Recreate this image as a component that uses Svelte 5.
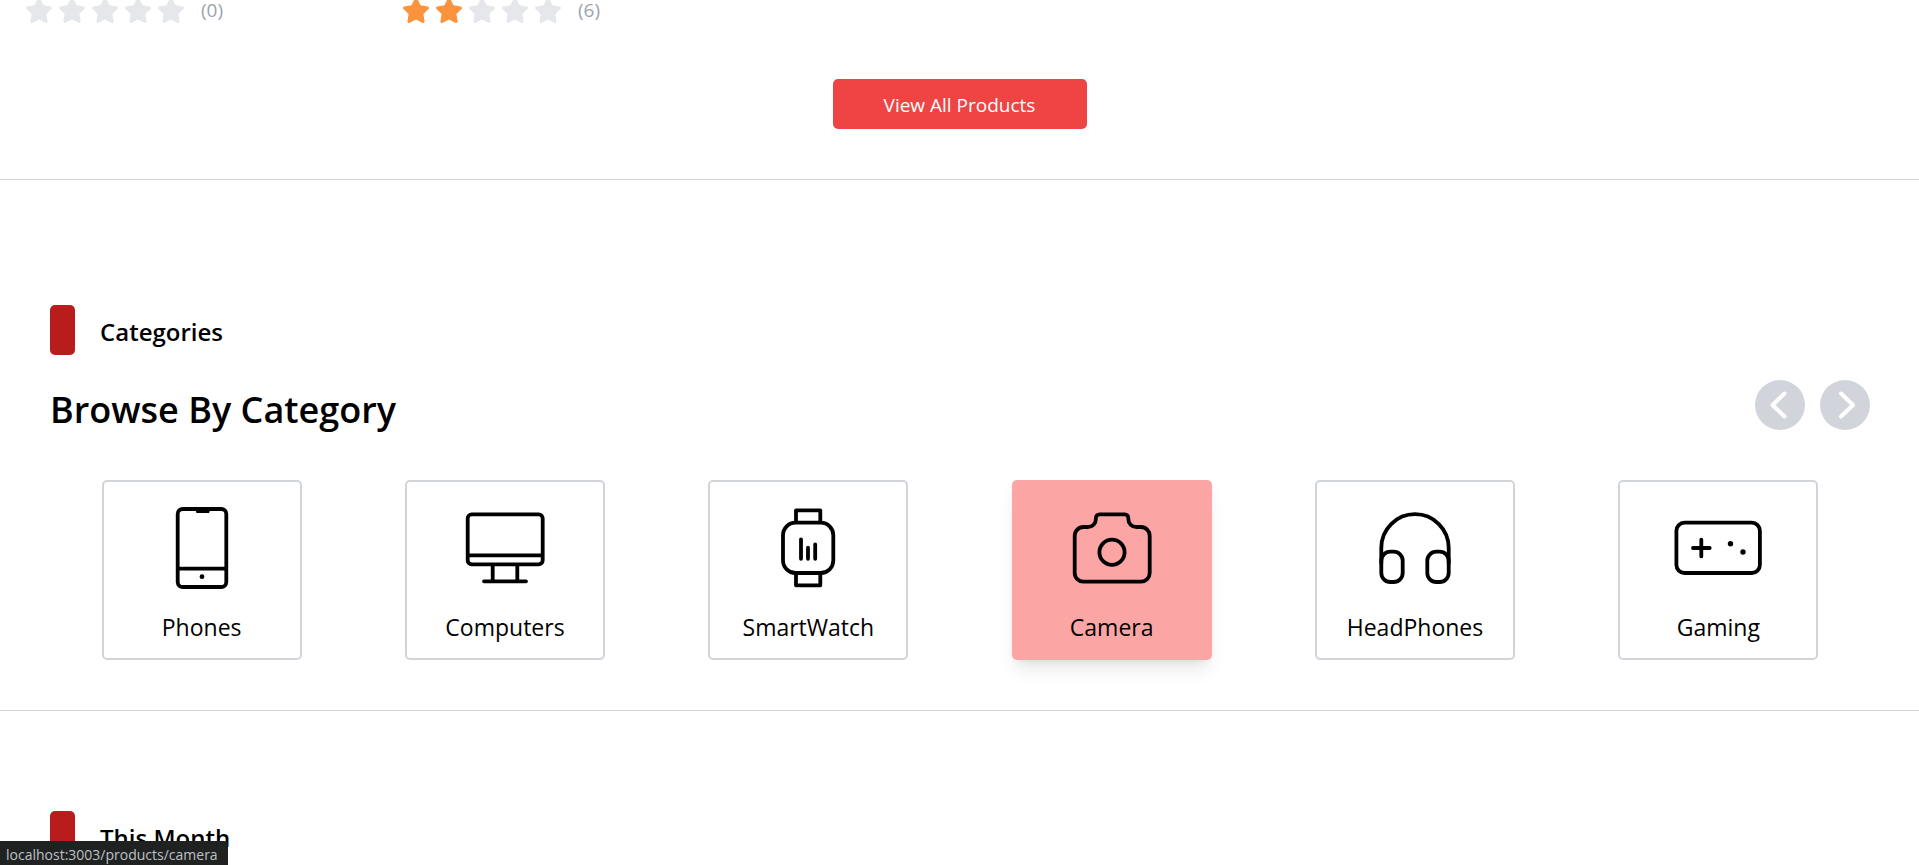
<script>
  const ratings = [
    { stars: 0, reviews: 0 },
    { stars: 2, reviews: 6 }
  ];
  const categories = [
    { name: 'Phones', slug: 'phones' },
    { name: 'Computers', slug: 'computers' },
    { name: 'SmartWatch', slug: 'smartwatch' },
    { name: 'Camera', slug: 'camera' },
    { name: 'HeadPhones', slug: 'headphones' },
    { name: 'Gaming', slug: 'gaming' }
  ];
  const active = 'camera';
</script>

<main class="page">
  <section class="products">
    <div class="ratings">
      {#each ratings as r}
        <div class="rating" role="img" aria-label="{r.stars} of 5 stars">
          {#each [1, 2, 3, 4, 5] as n}
            <svg class="star" class:filled={n <= r.stars} viewBox="0 0 576 512" aria-hidden="true">
              <path d="M259.3 17.8L194 150.2 47.9 171.5c-26.2 3.8-36.7 36.1-17.7 54.6l105.7 103-25 145.5c-4.5 26.3 23.2 46 46.4 33.7L288 439.6l130.7 68.7c23.2 12.2 50.9-7.4 46.4-33.7l-25-145.5 105.7-103c19-18.5 8.5-50.8-17.7-54.6L382 150.2 316.7 17.8c-11.7-23.6-45.6-23.9-57.4 0z" />
            </svg>
          {/each}
          <span class="count">({r.reviews})</span>
        </div>
      {/each}
    </div>
    <button class="view-all" type="button">View All Products</button>
  </section>

  <section class="browse">
    <div class="eyebrow">
      <span class="marker"></span>
      <span class="eyebrow-text">Categories</span>
    </div>
    <header class="heading">
      <h2>Browse By Category</h2>
      <div class="arrows">
        <button class="arrow" type="button" aria-label="Previous">
          <svg viewBox="0 0 50 50"><path d="M29.5 13.5 17.5 25l12 11.5" /></svg>
        </button>
        <button class="arrow" type="button" aria-label="Next">
          <svg viewBox="0 0 50 50"><path d="M21 13.5 33 25 21 36.5" /></svg>
        </button>
      </div>
    </header>
    <nav class="cards" aria-label="Categories">
      {#each categories as c}
        <a class="card" class:active={c.slug === active} href="/products/{c.slug}">
          <svg class="icon" viewBox="0 0 90 90" aria-hidden="true">
            {#if c.slug === 'phones'}
              <rect x="20.7" y="6" width="48.6" height="78" rx="5" />
              <path d="M21 65.7h48" />
              <path class="solid" d="M38 6h15.500l-1.500 4H39.500z" />
              <circle class="solid" cx="45" cy="73.700" r="2.400" />
            {:else if c.slug === 'computers'}
              <rect x="7.700" y="11.300" width="75" height="50" rx="4" />
              <path d="M8 52.300h74M32.700 62v16M57.300 62v16M24 78.300h42" />
            {:else if c.slug === 'smartwatch'}
              <rect x="20" y="19.700" width="50.300" height="50.300" rx="12.500" />
              <path d="M33 19V7.300h24.300V19M33 71v11.300h24.300V71" />
              <path d="M38 36.300v19.500M45 44.700v11.100M52.200 41.300v14.500" />
            {:else if c.slug === 'camera'}
              <path d="M32.500 11.300h25.200c2.200 0 3.600 1.500 3.600 3.600v0.600c0 5 3.400 8.500 8.200 8.500h4.500c4.800 0 8.700 3.900 8.700 8.700V70c0 4.800-3.900 8.700-8.700 8.700H16.400c-4.800 0-8.700-3.900-8.700-8.700V32.700c0-4.800 3.900-8.700 8.700-8.700h4.300c4.800 0 8.200-3.500 8.200-8.500v-0.600c0-2.100 1.400-3.600 3.600-3.600z" />
              <circle cx="45" cy="49.300" r="12.600" />
            {:else if c.slug === 'headphones'}
              <path d="M11.300 60V44.900a33.700 33.700 0 0 1 67.400 0V60" />
              <path d="M11.300 57.700a9 9 0 0 1 9-9h3.400a9 9 0 0 1 9 9V70a9 9 0 0 1-9 9h-3.400a9 9 0 0 1-9-9zM57.300 57.700a9 9 0 0 1 9-9h3.400a9 9 0 0 1 9 9V70a9 9 0 0 1-9 9h-3.400a9 9 0 0 1-9-9z" />
            {:else}
              <rect x="3.400" y="19.700" width="83.500" height="50.300" rx="8" />
              <path d="M20 45h16.700M28.300 36.600v16.800" />
              <circle class="solid" cx="57.500" cy="40.700" r="2.700" />
              <circle class="solid" cx="70" cy="49" r="2.700" />
            {/if}
          </svg>
          <span class="label">{c.name}</span>
        </a>
      {/each}
    </nav>
  </section>

  <section class="month">
    <div class="eyebrow">
      <span class="marker"></span>
      <span class="eyebrow-text">This Month</span>
    </div>
  </section>

  <div class="status">localhost:3003/products/camera</div>
</main>

<style>
  :global(body) {
    margin: 0;
    background: #fff;
  }
  .page,
  .page * {
    box-sizing: border-box;
  }
  .page {
    height: 100vh;
    overflow: hidden;
    color: #000;
    font-family: 'Open Sans', 'Noto Sans', sans-serif;
  }
  button {
    border: 0;
    padding: 0;
    font: inherit;
    cursor: pointer;
  }
  .products {
    display: flex;
    flex-direction: column;
    align-items: center;
    padding-bottom: 50px;
    border-bottom: 1px solid #d1d5db;
  }
  .ratings {
    display: flex;
    align-self: stretch;
    margin-top: -2px;
    padding-left: 25px;
    gap: 112px;
  }
  .rating {
    display: flex;
    align-items: center;
    width: 265px;
    height: 25px;
    gap: 5px;
  }
  .star {
    flex: none;
    width: 28px;
    height: 25px;
    fill: #e5e7eb;
  }
  .star.filled {
    fill: #fb923c;
  }
  .count {
    margin-left: 11px;
    padding-bottom: 1px;
    font-size: 19px;
    line-height: 24px;
    color: #9ca3af;
  }
  .view-all {
    margin-top: 56px;
    height: 50px;
    padding: 2px 50px 0;
    min-width: 254px;
    border-radius: 5px;
    background: #ef4444;
    color: #fff;
    font-size: 19px;
  }
  .browse {
    padding: 125px 49px 50px 50px;
    border-bottom: 1px solid #d1d5db;
  }
  .eyebrow {
    display: flex;
    gap: 25px;
  }
  .marker {
    width: 25px;
    height: 50px;
    border-radius: 5px;
    background: #b91c1c;
  }
  .eyebrow-text {
    padding-top: 9px;
    font-size: 24px;
    line-height: 35px;
    font-weight: 600;
  }
  .heading {
    display: flex;
    justify-content: space-between;
    margin-top: 25px;
  }
  h2 {
    margin: 0;
    padding-top: 7px;
    font-size: 36px;
    line-height: 45px;
    font-weight: 600;
  }
  .arrows {
    display: flex;
    gap: 15px;
  }
  .arrow {
    width: 50px;
    height: 50px;
    border-radius: 50%;
    background: #d1d5db;
  }
  .arrow svg {
    display: block;
    fill: none;
    stroke: #fff;
    stroke-width: 4;
    stroke-linecap: round;
    stroke-linejoin: round;
  }
  .cards {
    display: grid;
    grid-template-columns: repeat(6, 1fr);
    justify-items: center;
    margin-top: 48px;
  }
  .card {
    display: flex;
    flex-direction: column;
    align-items: center;
    width: 200px;
    height: 180px;
    padding-top: 21px;
    border: 2px solid #d1d5db;
    border-radius: 5px;
    color: #000;
    text-decoration: none;
  }
  .card.active {
    border-color: #fca5a5;
    background: #fca5a5;
    box-shadow:
      0 12px 19px -4px rgb(0 0 0 / 0.1),
      0 5px 8px -5px rgb(0 0 0 / 0.1);
  }
  .icon {
    width: 90px;
    height: 90px;
    fill: none;
    stroke: #000;
    stroke-width: 3.8;
    stroke-linecap: round;
    stroke-linejoin: round;
  }
  .icon .solid {
    fill: #000;
    stroke: none;
  }
  .label {
    margin-top: 17px;
    font-size: 23px;
    line-height: 35px;
  }
  .month {
    padding: 100px 50px 0;
  }
  .status {
    position: fixed;
    left: 0;
    bottom: 0;
    height: 24px;
    padding: 0 10px 0 6px;
    border-top-right-radius: 4px;
    background: #202121;
    color: #bdc1c6;
    font-size: 14px;
    line-height: 27px;
  }
</style>
